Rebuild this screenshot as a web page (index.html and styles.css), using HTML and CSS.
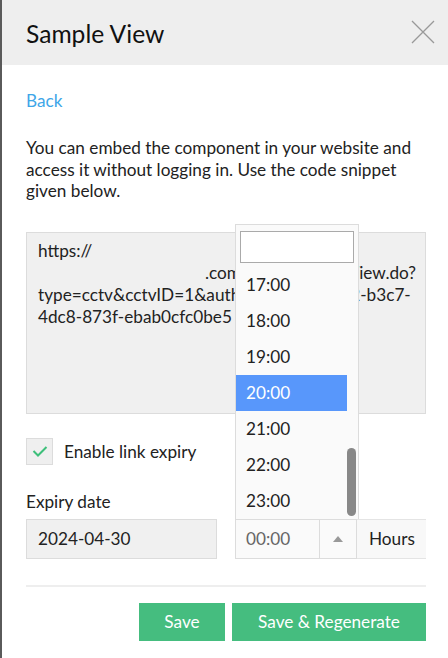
FILE: index.html
```html
<!DOCTYPE html>
<html>
<head>
<meta charset="utf-8">
<link rel="stylesheet" href="styles.css">
</head>
<body>
<div class="modal">
  <div class="header">
    <h1 class="title">Sample View</h1>
    <svg class="close" width="24" height="24" viewBox="0 0 24 24"><path d="M1 1 L23 23 M23 1 L1 23" stroke="#999" stroke-width="1.3" fill="none"/></svg>
  </div>
  <div class="content">
    <a class="back" href="#">Back</a>
    <p class="desc">You can embed the component in your website and access it without logging in. Use the code snippet given below.</p>
    <div class="code">
      <span class="line">https://</span>
      <span class="line indent">.com/store/SampleView.do?</span>
      <span class="line">type=cctv&amp;cctvID=1&amp;authKey=3f9a1c7e2-b3c7-</span>
      <span class="line">4dc8-873f-ebab0cfc0be5</span>
    </div>
    <label class="check-row">
      <span class="checkbox"><svg width="16" height="12" viewBox="0 0 16 12"><path d="M1.5 6 L6 10.5 L14.5 2" stroke="#3dbf7a" stroke-width="2" fill="none"/></svg></span>
      <span>Enable link expiry</span>
    </label>
    <div class="field-label">Expiry date</div>
    <div class="expiry-row">
      <div class="date-input">2024-04-30</div>
      <div class="time-wrap">
        <div class="dropdown">
          <div class="search"></div>
          <div class="list">
            <div class="opt">17:00</div>
            <div class="opt">18:00</div>
            <div class="opt">19:00</div>
            <div class="opt active">20:00</div>
            <div class="opt">21:00</div>
            <div class="opt">22:00</div>
            <div class="opt">23:00</div>
            <div class="scrollthumb"></div>
          </div>
        </div>
        <div class="time-input">00:00</div>
        <div class="arrow"><svg width="10" height="6" viewBox="0 0 10 6"><path d="M0 6 L5 0 L10 6 Z" fill="#999"/></svg></div>
      </div>
      <div class="hours">Hours</div>
    </div>
    <hr class="divider">
    <div class="actions">
      <button class="btn btn-save">Save</button>
      <button class="btn btn-regen">Save &amp; Regenerate</button>
    </div>
  </div>
</div>
</body>
</html>
```
FILE: styles.css
```css
* { box-sizing: border-box; }
html, body { margin: 0; padding: 0; background: #fff; }
body {
  font-family: Lato, "Open Sans", sans-serif;
  color: #222;
  font-size: 17.2px;
  width: 448px;
  height: 658px;
  overflow: hidden;
}
.modal {
  border-left: 2px solid #5a5a5a;
  height: 658px;
}
.header {
  background: #eeeeee;
  height: 65px;
  display: flex;
  align-items: center;
  justify-content: space-between;
  padding: 0 13px 0 24px;
}
.title {
  margin: 0;
  font-weight: 400;
  font-size: 24.6px;
  color: #111;
  padding-top: 1px;
}
.close { margin-top: -1px; }
.content {
  padding: 24px 22px 0 24px;
}
.back {
  display: block;
  color: #3ea6e8;
  text-decoration: none;
  line-height: 24px;
}
.desc {
  margin: 24px 0 0;
  line-height: 21.5px;
  color: #222;
}
.code {
  margin-top: 30px;
  height: 182px;
  background: #f0f0f0;
  border: 1px solid #dcdcdc;
  padding: 7px 11px;
  line-height: 22px;
}
.line { display: block; white-space: nowrap; }
.indent { padding-left: 167px; }
.check-row {
  display: flex;
  align-items: center;
  gap: 11px;
  margin-top: 24px;
}
.checkbox {
  width: 27px;
  height: 27px;
  background: #efefef;
  border: 1px solid #dcdcdc;
  display: flex;
  align-items: center;
  justify-content: center;
}
.field-label {
  margin-top: 26px;
  line-height: 22px;
}
.expiry-row {
  display: flex;
  margin-top: 6px;
  height: 40px;
}
.date-input {
  width: 191px;
  background: #f0f0f0;
  border: 1px solid #dcdcdc;
  padding-left: 11px;
  display: flex;
  align-items: center;
}
.time-wrap {
  position: relative;
  margin-left: 18px;
  display: flex;
  width: 122px;
  border: 1px solid #dcdcdc;
  background: #fafafa;
}
.time-input {
  width: 84px;
  border-right: 1px solid #dcdcdc;
  color: #666;
  padding-left: 10px;
  display: flex;
  align-items: center;
}
.arrow {
  flex: 1;
  display: flex;
  align-items: center;
  justify-content: center;
}
.hours {
  width: 69px;
  background: #f8f8f8;
  border-top: 1px solid #e4e4e4;
  border-bottom: 1px solid #e4e4e4;
  padding-left: 12px;
  display: flex;
  align-items: center;
}
.dropdown {
  position: absolute;
  left: -1px;
  bottom: 39px;
  width: 124px;
  background: #fafafa;
  border: 1px solid #dcdcdc;
  border-bottom: none;
}
.search {
  margin: 6px 4px 4px 4px;
  height: 32px;
  background: #fff;
  border: 1px solid #aaa;
}
.list {
  position: relative;
  height: 252px;
}
.opt {
  height: 36px;
  width: 111px;
  padding-left: 10px;
  display: flex;
  align-items: center;
}
.opt.active {
  background: #5897fb;
  color: #fff;
}
.scrollthumb {
  position: absolute;
  right: 2px;
  top: 181px;
  width: 9px;
  height: 68px;
  border-radius: 4.5px;
  background: #888;
}
.divider {
  margin: 26px 0 0;
  border: none;
  height: 2px;
  background: #eeeeee;
}
.actions {
  display: flex;
  justify-content: flex-end;
  gap: 7px;
  margin-top: 16px;
}
.btn {
  font-family: Lato, "Open Sans", sans-serif;
  font-size: 17.2px;
  color: #fff;
  background: #45bd7f;
  border: none;
  height: 38px;
  padding: 0;
}
.btn-save { width: 86px; }
.btn-regen { width: 194px; }
```
